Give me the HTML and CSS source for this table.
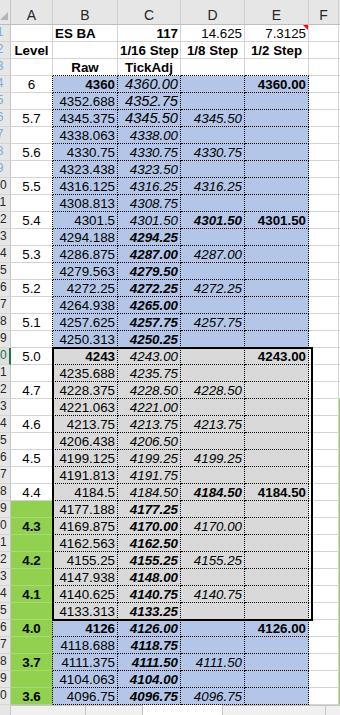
FILE: index.html
```html
<!DOCTYPE html>
<html>
<head>
<meta charset="utf-8">
<link rel="stylesheet" href="styles.css">
</head>
<body>
<div class="sheet">
  <div class="row hrow">
    <div class="h corner"><svg width="11" height="24" viewBox="0 0 11 24"><polygon points="0,20 8,12 8,20" fill="#b4b4b4"/></svg></div>
    <div class="h">A</div><div class="h">B</div><div class="h">C</div><div class="h">D</div><div class="h">E</div><div class="h">F</div><div class="h">G</div>
  </div>

  <div class="row"><div class="rh one"><span>1</span></div><div class="c"></div><div class="c b">ES BA</div><div class="c b r">117</div><div class="c r">14.625</div><div class="c r note">7.3125</div><div class="c"></div><div class="c"></div></div>
  <div class="row"><div class="rh one"><span>2</span></div><div class="c b m">Level</div><div class="c"></div><div class="c b m">1/16 Step</div><div class="c b m">1/8 Step</div><div class="c b m">1/2 Step</div><div class="c"></div><div class="c"></div></div>
  <div class="row"><div class="rh one"><span>3</span></div><div class="c"></div><div class="c b m db">Raw</div><div class="c b m db">TickAdj</div><div class="c db"></div><div class="c db"></div><div class="c"></div><div class="c"></div></div>

  <div class="row bl"><div class="rh one"><span>4</span></div><div class="c a">6</div><div class="c d b">4360</div><div class="c d i big">4360.00</div><div class="c d"></div><div class="c d b">4360.00</div><div class="c"></div><div class="c"></div></div>
  <div class="row bl"><div class="rh one"><span>5</span></div><div class="c a"></div><div class="c d">4352.688</div><div class="c d i big">4352.75</div><div class="c d"></div><div class="c d"></div><div class="c"></div><div class="c"></div></div>
  <div class="row bl"><div class="rh one"><span>6</span></div><div class="c a">5.7</div><div class="c d">4345.375</div><div class="c d i big">4345.50</div><div class="c d i">4345.50</div><div class="c d"></div><div class="c"></div><div class="c"></div></div>
  <div class="row bl"><div class="rh one"><span>7</span></div><div class="c a"></div><div class="c d">4338.063</div><div class="c d i">4338.00</div><div class="c d"></div><div class="c d"></div><div class="c"></div><div class="c"></div></div>
  <div class="row bl"><div class="rh one"><span>8</span></div><div class="c a">5.6</div><div class="c d">4330.75</div><div class="c d i">4330.75</div><div class="c d i">4330.75</div><div class="c d"></div><div class="c"></div><div class="c"></div></div>
  <div class="row bl"><div class="rh one"><span>9</span></div><div class="c a"></div><div class="c d">4323.438</div><div class="c d i">4323.50</div><div class="c d"></div><div class="c d"></div><div class="c"></div><div class="c"></div></div>
  <div class="row bl"><div class="rh"><span>10</span></div><div class="c a">5.5</div><div class="c d">4316.125</div><div class="c d i">4316.25</div><div class="c d i">4316.25</div><div class="c d"></div><div class="c"></div><div class="c"></div></div>
  <div class="row bl"><div class="rh"><span>11</span></div><div class="c a"></div><div class="c d">4308.813</div><div class="c d i">4308.75</div><div class="c d"></div><div class="c d"></div><div class="c"></div><div class="c"></div></div>
  <div class="row bl"><div class="rh"><span>12</span></div><div class="c a">5.4</div><div class="c d">4301.5</div><div class="c d i">4301.50</div><div class="c d bi">4301.50</div><div class="c d b">4301.50</div><div class="c"></div><div class="c"></div></div>
  <div class="row bl"><div class="rh"><span>13</span></div><div class="c a"></div><div class="c d">4294.188</div><div class="c d bi">4294.25</div><div class="c d"></div><div class="c d"></div><div class="c"></div><div class="c"></div></div>
  <div class="row bl"><div class="rh"><span>14</span></div><div class="c a">5.3</div><div class="c d">4286.875</div><div class="c d bi">4287.00</div><div class="c d i">4287.00</div><div class="c d"></div><div class="c"></div><div class="c"></div></div>
  <div class="row bl"><div class="rh"><span>15</span></div><div class="c a"></div><div class="c d">4279.563</div><div class="c d bi">4279.50</div><div class="c d"></div><div class="c d"></div><div class="c"></div><div class="c"></div></div>
  <div class="row bl"><div class="rh"><span>16</span></div><div class="c a">5.2</div><div class="c d">4272.25</div><div class="c d bi">4272.25</div><div class="c d i">4272.25</div><div class="c d"></div><div class="c"></div><div class="c"></div></div>
  <div class="row bl"><div class="rh"><span>17</span></div><div class="c a"></div><div class="c d">4264.938</div><div class="c d bi">4265.00</div><div class="c d"></div><div class="c d"></div><div class="c"></div><div class="c"></div></div>
  <div class="row bl"><div class="rh"><span>18</span></div><div class="c a">5.1</div><div class="c d">4257.625</div><div class="c d bi">4257.75</div><div class="c d i">4257.75</div><div class="c d"></div><div class="c"></div><div class="c"></div></div>
  <div class="row bl"><div class="rh"><span>19</span></div><div class="c a"></div><div class="c d">4250.313</div><div class="c d bi">4250.25</div><div class="c d"></div><div class="c d"></div><div class="c"></div><div class="c"></div></div>

  <div class="block">
    <div class="row gr"><div class="rh sel"><span>20</span></div><div class="c a">5.0</div><div class="c d b">4243</div><div class="c d i">4243.00</div><div class="c d"></div><div class="c d b">4243.00</div><div class="c"></div><div class="c"></div></div>
    <div class="row gr"><div class="rh"><span>21</span></div><div class="c a"></div><div class="c d">4235.688</div><div class="c d i">4235.75</div><div class="c d"></div><div class="c d"></div><div class="c"></div><div class="c"></div></div>
    <div class="row gr"><div class="rh"><span>22</span></div><div class="c a">4.7</div><div class="c d">4228.375</div><div class="c d i">4228.50</div><div class="c d i">4228.50</div><div class="c d"></div><div class="c"></div><div class="c"></div></div>
    <div class="row gr"><div class="rh"><span>23</span></div><div class="c a"></div><div class="c d">4221.063</div><div class="c d i">4221.00</div><div class="c d"></div><div class="c d"></div><div class="c"></div><div class="c gn"></div></div>
    <div class="row gr"><div class="rh"><span>24</span></div><div class="c a">4.6</div><div class="c d">4213.75</div><div class="c d i">4213.75</div><div class="c d i">4213.75</div><div class="c d"></div><div class="c"></div><div class="c gn"></div></div>
    <div class="row gr"><div class="rh"><span>25</span></div><div class="c a"></div><div class="c d">4206.438</div><div class="c d i">4206.50</div><div class="c d"></div><div class="c d"></div><div class="c"></div><div class="c gn"></div></div>
    <div class="row gr"><div class="rh"><span>26</span></div><div class="c a">4.5</div><div class="c d">4199.125</div><div class="c d i">4199.25</div><div class="c d i">4199.25</div><div class="c d"></div><div class="c"></div><div class="c gn"></div></div>
    <div class="row gr"><div class="rh"><span>27</span></div><div class="c a"></div><div class="c d">4191.813</div><div class="c d i">4191.75</div><div class="c d"></div><div class="c d"></div><div class="c"></div><div class="c gn"></div></div>
    <div class="row gr"><div class="rh"><span>28</span></div><div class="c a">4.4</div><div class="c d">4184.5</div><div class="c d i">4184.50</div><div class="c d bi">4184.50</div><div class="c d b">4184.50</div><div class="c"></div><div class="c gn"></div></div>
    <div class="row gr"><div class="rh"><span>29</span></div><div class="c a gn"></div><div class="c d">4177.188</div><div class="c d bi">4177.25</div><div class="c d"></div><div class="c d"></div><div class="c"></div><div class="c gn"></div></div>
    <div class="row gr"><div class="rh"><span>30</span></div><div class="c a gn b">4.3</div><div class="c d">4169.875</div><div class="c d bi">4170.00</div><div class="c d i">4170.00</div><div class="c d"></div><div class="c"></div><div class="c gn"></div></div>
    <div class="row gr"><div class="rh"><span>31</span></div><div class="c a gn"></div><div class="c d">4162.563</div><div class="c d bi">4162.50</div><div class="c d"></div><div class="c d"></div><div class="c"></div><div class="c gn"></div></div>
    <div class="row gr"><div class="rh"><span>32</span></div><div class="c a gn b">4.2</div><div class="c d">4155.25</div><div class="c d bi">4155.25</div><div class="c d i">4155.25</div><div class="c d"></div><div class="c"></div><div class="c gn"></div></div>
    <div class="row gr"><div class="rh"><span>33</span></div><div class="c a gn"></div><div class="c d">4147.938</div><div class="c d bi">4148.00</div><div class="c d"></div><div class="c d"></div><div class="c"></div><div class="c gn"></div></div>
    <div class="row gr"><div class="rh"><span>34</span></div><div class="c a gn b">4.1</div><div class="c d">4140.625</div><div class="c d bi">4140.75</div><div class="c d i">4140.75</div><div class="c d"></div><div class="c"></div><div class="c gn"></div></div>
    <div class="row gr"><div class="rh"><span>35</span></div><div class="c a gn"></div><div class="c d">4133.313</div><div class="c d bi">4133.25</div><div class="c d"></div><div class="c d"></div><div class="c"></div><div class="c gn"></div></div>
  </div>

  <div class="row bl"><div class="rh"><span>36</span></div><div class="c a gn b">4.0</div><div class="c d b">4126</div><div class="c d bi">4126.00</div><div class="c d"></div><div class="c d b">4126.00</div><div class="c"></div><div class="c gn"></div></div>
  <div class="row bl"><div class="rh"><span>37</span></div><div class="c a gn"></div><div class="c d">4118.688</div><div class="c d bi">4118.75</div><div class="c d"></div><div class="c d"></div><div class="c"></div><div class="c gn"></div></div>
  <div class="row bl"><div class="rh"><span>38</span></div><div class="c a gn b">3.7</div><div class="c d">4111.375</div><div class="c d bi">4111.50</div><div class="c d i">4111.50</div><div class="c d"></div><div class="c"></div><div class="c gn"></div></div>
  <div class="row bl"><div class="rh"><span>39</span></div><div class="c a gn"></div><div class="c d">4104.063</div><div class="c d bi">4104.00</div><div class="c d"></div><div class="c d"></div><div class="c"></div><div class="c gn"></div></div>
  <div class="row bl"><div class="rh"><span>40</span></div><div class="c a gn b">3.6</div><div class="c d">4096.75</div><div class="c d bi">4096.75</div><div class="c d i">4096.75</div><div class="c d"></div><div class="c"></div><div class="c gn"></div></div>
</div>
<div class="foot">
  <div class="f-corner"></div>
  <div class="f-tabs"><div class="f-tab"></div></div>
  <div class="f-gap"></div>
  <div class="f-scroll"><div class="f-track"></div></div>
</div>
</body>
</html>
```

FILE: styles.css
```css
* { box-sizing: border-box; }
html, body { margin: 0; padding: 0; background: #fff; }
body {
  width: 340px;
  height: 715px;
  overflow: hidden;
  font-family: "Liberation Sans", Arial, sans-serif;
  font-size: 13.33px;
  color: #000;
}
.sheet {
  display: flex;
  flex-direction: column;
  width: 340px;
  overflow: hidden;
}
.row {
  display: grid;
  grid-template-columns: 11px 42px 65px 63px 64px 64px 30px 30px;
  height: 17px;
  flex: none;
}
.hrow { height: 25px; }

/* column headers */
.h {
  background: #e6e6e6;
  border-right: 1px solid #cfcfcf;
  border-bottom: 1px solid #bdbdbd;
  text-align: center;
  font-size: 14px;
  line-height: 18px;
  padding-top: 6px;
  color: #262626;
}
.corner { padding: 0; border-right: 1px solid #c4c4c4; }
.corner svg { display: block; }

/* row headers */
.rh {
  background: #e6e6e6;
  border-right: 1px solid #c4c4c4;
  border-bottom: 1px solid #d4d4d4;
  overflow: hidden;
  font-size: 12px;
  line-height: 15px;
  color: #262626;
}
.rh span {
  display: block;
  width: 20px;
  margin-left: -10px;
  text-align: center;
}
.rh.one { color: #7ea9d9; }
.rh.sel {
  border-right: 2px solid #217346;
  color: #217346;
  background: #dedede;
}

/* cells */
.c {
  border-right: 1px solid #d4d4d4;
  border-bottom: 1px solid #d4d4d4;
  padding: 1px 2px 0;
  line-height: 15px;
  white-space: nowrap;
  overflow: hidden;
}
.r { text-align: right; }
.m { text-align: center; }
.b { font-weight: bold; }
.i { font-style: italic; }
.bi { font-weight: bold; font-style: italic; }
.big { font-size: 14.67px; }

.db { border-bottom: 1px dotted #000; }

.a {
  text-align: center;
  border-right: 1px dotted #000;
}
.d {
  text-align: right;
  border-right: 1px dotted #000;
  border-bottom: 1px dotted #000;
}
.bl .d { background: #b4c6e7; }
.gr .d { background: #d9d9d9; }
.gn {
  background: #92d050;
  border-bottom-color: #a6da72;
}

.note { position: relative; }
.note::after {
  content: "";
  position: absolute;
  top: 0;
  right: 0;
  border-top: 5px solid #ff0000;
  border-left: 5px solid transparent;
}

/* thick outline around the grey block */
.block {
  position: relative;
  display: flex;
  flex-direction: column;
}
.block::after {
  content: "";
  position: absolute;
  top: -1px;
  bottom: -1px;
  left: 52px;
  width: 257px;
  border: 2px solid #000;
  pointer-events: none;
}

/* bottom strip */
.foot {
  display: flex;
  height: 10px;
}
.f-corner { width: 10px; background: #e6e6e6; }
.f-tabs {
  width: 133px;
  background: #f0f0f0;
  border-top: 1px solid #c6c6c6;
  border-left: 1px solid #c6c6c6;
  border-right: 1px solid #c6c6c6;
  display: flex;
}
.f-tab { width: 75px; border-right: 1px solid #c6c6c6; }
.f-gap { width: 79px; background: #fff; }
.f-scroll {
  flex: 1;
  background: #f0f0f0;
  border-top: 1px solid #c6c6c6;
  border-left: 1px solid #c6c6c6;
  display: flex;
}
.f-track { width: 103px; border-right: 1px solid #c6c6c6; }
```
